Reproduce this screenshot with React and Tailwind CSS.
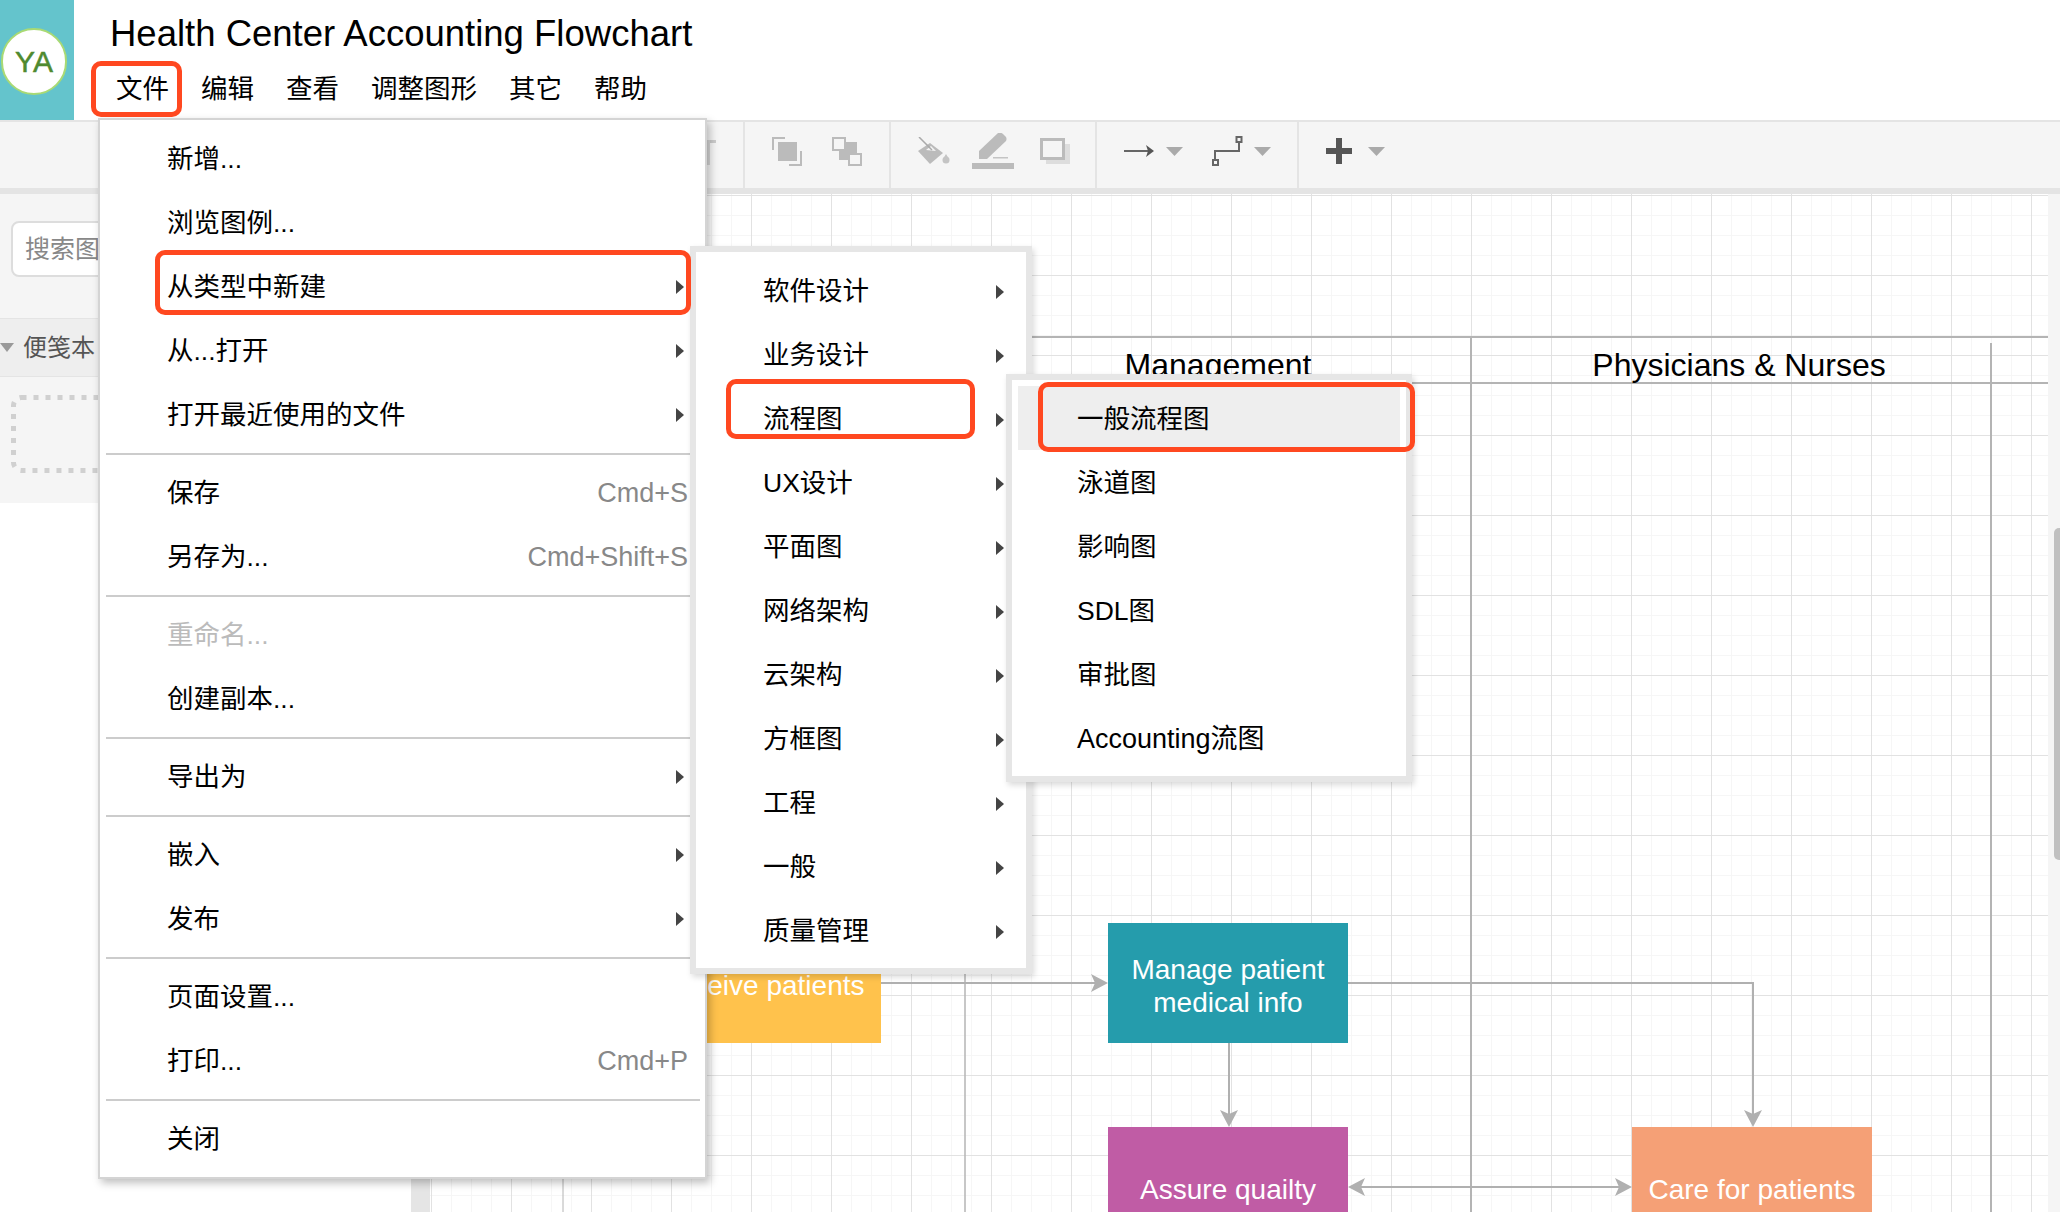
// App.jsx
import React from 'react';

const fileMenu = [
  [{ label: '新增...' }, { label: '浏览图例...' }, { label: '从类型中新建', arrow: true }, { label: '从...打开', arrow: true }, { label: '打开最近使用的文件', arrow: true }],
  [{ label: '保存', shortcut: 'Cmd+S' }, { label: '另存为...', shortcut: 'Cmd+Shift+S' }],
  [{ label: '重命名...', disabled: true }, { label: '创建副本...' }],
  [{ label: '导出为', arrow: true }],
  [{ label: '嵌入', arrow: true }, { label: '发布', arrow: true }],
  [{ label: '页面设置...' }, { label: '打印...', shortcut: 'Cmd+P' }],
  [{ label: '关闭' }],
];

const typeMenu = ['软件设计', '业务设计', '流程图', 'UX设计', '平面图', '网络架构', '云架构', '方框图', '工程', '一般', '质量管理'];
const flowMenu = ['一般流程图', '泳道图', '影响图', 'SDL图', '审批图', 'Accounting流图'];
const topMenu = ['文件', '编辑', '查看', '调整图形', '其它', '帮助'];

const Caret = () => (
  <svg width="8" height="14" viewBox="0 0 8 14" className="shrink-0">
    <path d="M0 0 L8 7 L0 14 Z" fill="#444" />
  </svg>
);

const Dropdown = ({ className = '' }) => (
  <svg width="17" height="9" viewBox="0 0 17 9" className={className}>
    <path d="M0 0 H17 L8.5 9 Z" fill="#aaa" />
  </svg>
);

const FileItem = ({ label, shortcut, arrow, disabled }) => (
  <div className="h-16 flex items-center justify-between pl-[67px] pr-[17px]">
    <span className={disabled ? 'text-[#bbbbbb]' : 'text-black'}>{label}</span>
    {shortcut && <span className="text-[#888888] text-[27px]">{shortcut}</span>}
    {arrow && <span className="pr-[4px] flex"><Caret /></span>}
  </div>
);

const RedBox = ({ className }) => (
  <div className={`absolute z-40 border-[5px] border-[#ff4820] rounded-[10px] ${className}`} />
);

// toolbar drawings
const TextIcon = () => (
  <svg width="10" height="28" viewBox="0 0 10 28">
    <rect x="0" y="3" width="10" height="3" fill="#cccccc" />
    <rect x="0" y="3" width="4" height="25" fill="#d4d4d4" />
  </svg>
);

const ToFront = () => (
  <svg width="30" height="29" viewBox="0 0 30 29" fill="none">
    <path d="M1 13 V1 H13" stroke="#bbb" strokeWidth="2" />
    <rect x="6" y="5" width="19" height="19" fill="#bbb" />
    <path d="M29 14 V28 H17" stroke="#bbb" strokeWidth="2" />
  </svg>
);

const ToBack = () => (
  <svg width="30" height="29" viewBox="0 0 30 29" fill="none">
    <rect x="7" y="5" width="18" height="18" fill="#bbb" />
    <rect x="1" y="1" width="12" height="12" fill="#f5f5f5" stroke="#bbb" strokeWidth="2" />
    <rect x="17" y="17" width="12" height="11" fill="#f5f5f5" stroke="#bbb" strokeWidth="2" />
  </svg>
);

const FillBucket = () => (
  <svg width="33" height="28" viewBox="0 0 33 28" fill="none">
    <path d="M0 14 L12 6 L25 16 L12 27 Z" fill="#bbb" />
    <path d="M8 13 L13 9 L18 14 Z" fill="#f5f5f5" />
    <path d="M1 0 L14 13" stroke="#aaa" strokeWidth="1.5" />
    <circle cx="28" cy="23" r="3.5" fill="#c4c4c4" />
    <path d="M28 17 L25 22 H31 Z" fill="#c4c4c4" />
  </svg>
);

const Pencil = () => (
  <svg width="42" height="36" viewBox="0 0 42 36" fill="none">
    <path d="M7 26 V18 L26 0 Q29 -1 31 1 L34 4 Q35 6 34 8 L15 26 Z" fill="#bbb" />
    <rect x="21" y="24" width="15" height="1.5" fill="#c4c4c4" />
    <rect x="0" y="30" width="42" height="6" fill="#bbb" />
  </svg>
);

const ShadowBox = () => (
  <svg width="30" height="26" viewBox="0 0 30 26" fill="none">
    <rect x="6" y="6" width="24" height="20" fill="#dddddd" />
    <rect x="1.5" y="1.5" width="22" height="19" fill="#f5f5f5" stroke="#bbb" strokeWidth="3" />
  </svg>
);

const ArrowLine = () => (
  <svg width="30" height="12" viewBox="0 0 30 12" fill="none">
    <path d="M0 6 H24" stroke="#666" strokeWidth="2" />
    <path d="M22 0 L30 6 L22 12 L24 6 Z" fill="#555" />
  </svg>
);

const Waypoints = () => (
  <svg width="31" height="30" viewBox="0 0 31 30" fill="none">
    <path d="M27 6 V15 H3 V24" stroke="#666" strokeWidth="2" />
    <rect x="24.5" y="1" width="5" height="5" stroke="#666" strokeWidth="2" />
    <rect x="1" y="24" width="5" height="5" stroke="#666" strokeWidth="2" />
  </svg>
);

const Plus = () => (
  <svg width="26" height="26" viewBox="0 0 26 26">
    <path d="M10 0 H16 V10 H26 V16 H16 V26 H10 V16 H0 V10 H10 Z" fill="#555" />
  </svg>
);

// swimlanes and connectors, canvas coordinates
const Connectors = () => (
  <svg width="1618" height="1018" viewBox="0 0 1618 1018" className="absolute left-0 top-0" fill="none">
    <path d="M602 143 H1618 M602 189 H1618" stroke="#b4b4b4" strokeWidth="2" />
    <path d="M133 980 V1018" stroke="#b4b4b4" strokeWidth="1" />
    <path d="M535 700 V1018" stroke="#b4b4b4" strokeWidth="1.5" />
    <path d="M1041 144 V1018 M1561 149 V1018" stroke="#b4b4b4" strokeWidth="2" />
    <path d="M451 789 H670" stroke="#b0b0b0" strokeWidth="2" />
    <path d="M661 780 L678 789 L661 798 L665 789 Z" fill="#b0b0b0" />
    <path d="M918 789 H1323 V920" stroke="#b0b0b0" strokeWidth="2" />
    <path d="M1314 916 L1323 933 L1332 916 L1323 920 Z" fill="#b0b0b0" />
    <path d="M799 849 V920" stroke="#b0b0b0" strokeWidth="2" />
    <path d="M790 916 L799 933 L808 916 L799 920 Z" fill="#b0b0b0" />
    <path d="M928 993 H1194" stroke="#b0b0b0" strokeWidth="2" />
    <path d="M918 993 L935 984 L931 993 L935 1002 Z" fill="#b0b0b0" />
    <path d="M1202 993 L1185 984 L1189 993 L1185 1002 Z" fill="#b0b0b0" />
  </svg>
);

const App = () => {
  return (
    <div className="relative w-[2060px] h-[1212px] overflow-hidden bg-white flex flex-col font-['Liberation_Sans','Noto_Sans_CJK_SC',sans-serif] text-[26.5px] leading-none text-black">
      {/* Title bar */}
      <div className="h-[120px] flex shrink-0">
        <div className="w-[74px] h-full bg-[#64c4cc] pl-[1px] pt-[28px]">
          <div className="w-[66px] h-[67px] rounded-full bg-white border-2 border-[#a9da74] flex items-center justify-center text-[30px] font-medium text-[#4f8a2f] [-webkit-text-stroke:0.5px_#4f8a2f]">
            YA
          </div>
        </div>
        <div className="pl-[36px]">
          <div className="h-[68px] flex items-center text-[36.5px]">Health Center Accounting Flowchart</div>
          <div className="h-[42px] flex items-center gap-[32px] pl-[6px]">
            {topMenu.map((m) => (
              <span key={m}>{m}</span>
            ))}
          </div>
        </div>
      </div>

      {/* Toolbar */}
      <div className="h-[74px] shrink-0 flex bg-[#f5f5f5] border-t-2 border-b-[6px] border-[#e4e4e4]">
        <div className="w-[745px] border-r-2 border-[#e4e4e4] flex items-center justify-end pr-[27px] pb-2">
          <TextIcon />
        </div>
        <div className="w-[146px] border-r-2 border-[#e4e4e4] flex items-center pl-[27px] pb-2 gap-[30px]">
          <ToFront />
          <ToBack />
        </div>
        <div className="w-[206px] border-r-2 border-[#e4e4e4] flex items-center pl-[27px] pb-2">
          <FillBucket />
          <div className="ml-[21px]"><Pencil /></div>
          <div className="ml-[26px]"><ShadowBox /></div>
        </div>
        <div className="w-[202px] border-r-2 border-[#e4e4e4] flex items-center pl-[27px] pb-2">
          <ArrowLine />
          <Dropdown className="ml-[12px]" />
          <div className="ml-[29px]"><Waypoints /></div>
          <Dropdown className="ml-[11px]" />
        </div>
        <div className="flex items-center pl-[27px] pb-2">
          <Plus />
          <Dropdown className="ml-[16px]" />
        </div>
      </div>

      {/* Body */}
      <div className="flex flex-1 min-h-0">
        {/* Sidebar */}
        <div className="w-[411px] shrink-0">
          <div className="h-[309px] bg-[#f5f5f5] text-[24px] text-[#666666] overflow-hidden">
            <div className="mt-[27px] ml-[11px] w-[360px] h-[56px] bg-white border-2 border-[#dddddd] rounded-[8px] flex items-center pl-[12px] text-[25px] text-[#888888]">
              搜索图形
            </div>
            <div className="mt-[41px] h-[59px] bg-[#eeeeee] border-y border-[#e4e4e4] flex items-center">
              <svg width="14" height="9" viewBox="0 0 14 9" className="shrink-0">
                <path d="M0 0 H14 L7 9 Z" fill="#999" />
              </svg>
              <span className="ml-[9px] text-[#555555]">便笺本</span>
            </div>
            <svg width="360" height="78" viewBox="0 0 360 78" fill="none" className="mt-[18px] ml-[11px]">
              <rect x="2.5" y="2.5" width="355" height="73" rx="8" stroke="#d0d0d0" strokeWidth="5" strokeDasharray="5 7" />
            </svg>
          </div>
        </div>
        <div className="w-[19px] shrink-0 bg-[#e5e5e5]" />

        {/* Canvas */}
        <div className="relative w-[1618px] shrink-0 bg-white bg-[linear-gradient(#e2e2e2_1px,transparent_1px),linear-gradient(90deg,#e2e2e2_1px,transparent_1px),linear-gradient(#f6f6f6_1px,transparent_1px),linear-gradient(90deg,#f6f6f6_1px,transparent_1px)] bg-[size:80px_80px,80px_80px,20px_20px,20px_20px] bg-[position:1px_1px]">
          <Connectors />
          <div className="absolute left-[688px] w-[200px] top-[155px] text-center text-[32px]">Management</div>
          <div className="absolute left-[1109px] w-[400px] top-[155px] text-center text-[32px]">Physicians &amp; Nurses</div>

          <div className="absolute left-[211px] top-[729px] w-[240px] h-[120px] bg-[#ffc24c] text-white text-[28px] pt-[6px] flex items-center justify-center">
            Receive patients
          </div>
          <div className="absolute left-[678px] top-[729px] w-[240px] h-[120px] bg-[#259cac] text-white text-[28px] leading-[33px] pt-[6px] text-center flex items-center justify-center">
            Manage patient<br />medical info
          </div>
          <div className="absolute left-[678px] top-[933px] w-[240px] h-[120px] bg-[#c05ca5] text-white text-[28px] pt-[6px] flex items-center justify-center">
            Assure quailty
          </div>
          <div className="absolute left-[1202px] top-[933px] w-[240px] h-[120px] bg-[#f5a076] text-white text-[28px] pt-[6px] flex items-center justify-center">
            Care for patients
          </div>
        </div>

        {/* Scrollbar */}
        <div className="flex-1 bg-[#f5f5f5] flex justify-end">
          <div className="w-[6px] h-[332px] mt-[334px] bg-[#c0c0c0] rounded-l-[5px]" />
        </div>
      </div>

      {/* File menu */}
      <div className="absolute z-10 left-[98px] top-[118px] w-[609px] bg-white border-2 border-[#d4d4d4] pt-[7px] pb-[6px] shadow-[3px_4px_8px_rgba(0,0,0,0.25)]">
        {fileMenu.map((group, i) => (
          <div key={i}>
            {i > 0 && <div className="h-[2px] my-[6px] ml-[6px] mr-[5px] bg-[#cccccc]" />}
            {group.map((item) => (
              <FileItem key={item.label} {...item} />
            ))}
          </div>
        ))}
      </div>

      {/* Type submenu */}
      <div className="absolute z-20 left-[690px] top-[246px] w-[342px] bg-white border-[6px] border-[#e6e6e6] py-[6px] shadow-[2px_3px_6px_rgba(0,0,0,0.15)]">
        {typeMenu.map((label) => (
          <div key={label} className="h-16 flex items-center justify-between pl-[67px] pr-[22px] pt-[3px]">
            <span>{label}</span>
            <Caret />
          </div>
        ))}
      </div>

      {/* Flowchart submenu */}
      <div className="absolute z-30 left-[1006px] top-[374px] w-[406px] bg-white border-[6px] border-[#e6e6e6] py-[6px] shadow-[2px_3px_6px_rgba(0,0,0,0.15)]">
        {flowMenu.map((label, i) => (
          <div key={label} className={`h-16 mx-[6px] flex items-center pl-[59px] pt-[3px] ${i === 0 ? 'bg-[#eeeeee]' : ''} ${label.startsWith('Acc') ? 'text-[27px]' : ''}`}>
            {label}
          </div>
        ))}
      </div>

      {/* Red callouts */}
      <RedBox className="left-[91px] top-[61px] w-[91px] h-[56px]" />
      <RedBox className="left-[155px] top-[250px] w-[536px] h-[65px]" />
      <RedBox className="left-[726px] top-[379px] w-[249px] h-[60px]" />
      <RedBox className="left-[1038px] top-[382px] w-[377px] h-[70px]" />
    </div>
  );
};

export default App;
